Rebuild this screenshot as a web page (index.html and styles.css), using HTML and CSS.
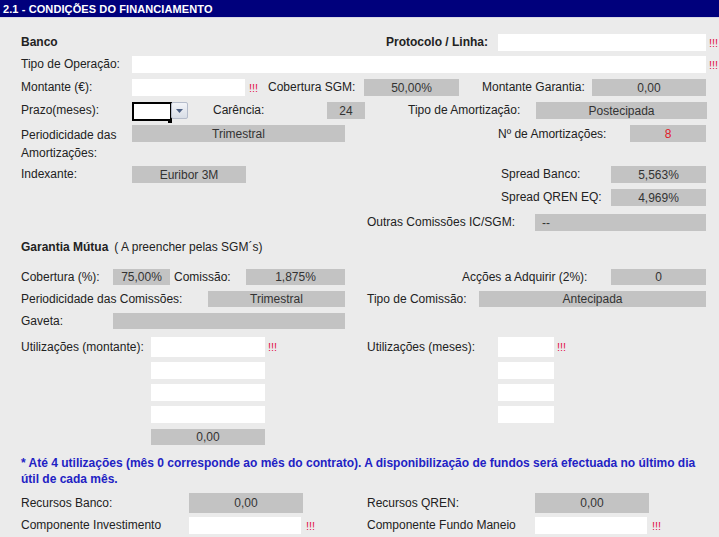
FILE: index.html
```html
<!DOCTYPE html>
<html lang="pt">
<head>
<meta charset="utf-8">
<title>2.1 - Condições do Financiamento</title>
<link rel="stylesheet" href="styles.css">
</head>
<body>
<div class="panel">
  <div class="hdr">2.1 - CONDIÇÕES DO FINANCIAMENTO</div>
  <div class="content">

    <div class="row r1">
      <span class="lbl b c-banco">Banco</span>
      <span class="lbl b c-proto">Protocolo / Linha:</span>
      <span class="fld white c-proto-f"></span>
      <span class="req">!!!</span>
    </div>

    <div class="row r2">
      <span class="lbl c-111">Tipo de Operação:</span>
      <span class="fld white c-tipo-f"></span>
      <span class="req">!!!</span>
    </div>

    <div class="row r3">
      <span class="lbl c-111">Montante (€):</span>
      <span class="fld white c-113"></span>
      <span class="req c-req-mont">!!!</span>
      <span class="lbl c-cob">Cobertura SGM:</span>
      <span class="fld grey c-95">50,00%</span>
      <span class="lbl c-mg">Montante Garantia:</span>
      <span class="fld grey c-114">0,00</span>
    </div>

    <div class="row r4">
      <span class="lbl c-111">Prazo(meses):</span>
      <span class="select">
        <span class="sel-box"></span>
        <span class="sel-btn"><svg width="7" height="4" viewBox="0 0 7 4"><path d="M0 0H7L3.5 4Z" fill="#4d6185"/></svg></span>
      </span>
      <span class="lbl c-car">Carência:</span>
      <span class="fld grey c-38">24</span>
      <span class="lbl c-tam">Tipo de Amortização:</span>
      <span class="fld grey c-171">Postecipada</span>
    </div>

    <div class="row r5">
      <span class="lbl two c-111">Periodicidade das Amortizações:</span>
      <span class="fld grey c-213">Trimestral</span>
      <span class="lbl c-nam">Nº de Amortizações:</span>
      <span class="fld grey red c-76">8</span>
    </div>

    <div class="row r6">
      <span class="lbl c-111">Indexante:</span>
      <span class="fld grey c-114">Euribor 3M</span>
      <span class="lbl c-spb">Spread Banco:</span>
      <span class="fld grey c-95">5,563%</span>
    </div>

    <div class="row r7">
      <span class="lbl c-spq">Spread QREN EQ:</span>
      <span class="fld grey c-95">4,969%</span>
    </div>

    <div class="row r8">
      <span class="lbl c-out">Outras Comissões IC/SGM:</span>
      <span class="fld grey left c-171">--</span>
    </div>

    <div class="row r9">
      <span class="lbl b">Garantia Mútua</span>
      <span class="lbl sub">( A preencher pelas SGM´s)</span>
    </div>

    <div class="row r10 short">
      <span class="lbl c-92">Cobertura (%):</span>
      <span class="fld grey c-57">75,00%</span>
      <span class="lbl c-com">Comissão:</span>
      <span class="fld grey c-99">1,875%</span>
      <span class="lbl c-acc">Acções a Adquirir (2%):</span>
      <span class="fld grey c-95">0</span>
    </div>

    <div class="row r11 short">
      <span class="lbl c-187">Periodicidade das Comissões:</span>
      <span class="fld grey c-137">Trimestral</span>
      <span class="lbl c-tcom">Tipo de Comissão:</span>
      <span class="fld grey c-227">Antecipada</span>
    </div>

    <div class="row r12 short">
      <span class="lbl c-92">Gaveta:</span>
      <span class="fld grey c-232"></span>
    </div>

    <div class="row r13 tall">
      <span class="lbl c-130">Utilizações (montante):</span>
      <span class="fld white c-114"></span>
      <span class="req c-req-ut">!!!</span>
      <span class="lbl c-131">Utilizações (meses):</span>
      <span class="fld white c-56"></span>
      <span class="req">!!!</span>
    </div>

    <div class="row r14">
      <span class="c-130"></span>
      <span class="fld white c-114"></span>
      <span class="c-gap233"></span>
      <span class="fld white c-56"></span>
    </div>
    <div class="row r15">
      <span class="c-130"></span>
      <span class="fld white c-114"></span>
      <span class="c-gap233"></span>
      <span class="fld white c-56"></span>
    </div>
    <div class="row r16">
      <span class="c-130"></span>
      <span class="fld white c-114"></span>
      <span class="c-gap233"></span>
      <span class="fld white c-56"></span>
    </div>

    <div class="row r17 short">
      <span class="c-130"></span>
      <span class="fld grey c-114">0,00</span>
    </div>

    <p class="note">* Até 4 utilizações (mês 0 corresponde ao mês do contrato). A disponibilização de fundos será efectuada no último dia útil de cada mês.</p>

    <div class="row r18 tall">
      <span class="lbl c-168">Recursos Banco:</span>
      <span class="fld grey c-114">0,00</span>
      <span class="c-64"></span>
      <span class="lbl c-168">Recursos QREN:</span>
      <span class="fld grey c-114">0,00</span>
    </div>

    <div class="row r19">
      <span class="lbl c-168">Componente Investimento</span>
      <span class="fld white c-112"></span>
      <span class="req c-req-comp">!!!</span>
      <span class="lbl c-168">Componente Fundo Maneio</span>
      <span class="fld white c-112"></span>
      <span class="req c-req-comp2">!!!</span>
    </div>

  </div>
</div>
</body>
</html>
```
FILE: styles.css
```css
* { box-sizing: border-box; }
html, body { margin: 0; padding: 0; }
body {
  background: #ebebeb;
  font-family: "Liberation Sans", Arial, sans-serif;
  font-size: 12px;
  color: #222;
  width: 719px;
  height: 537px;
  overflow: hidden;
}
.hdr {
  height: 18px;
  background: #00007c;
  color: #fff;
  font-weight: bold;
  font-size: 11px;
  letter-spacing: 0.1px;
  line-height: 18px;
  padding-left: 3px;
  border-bottom: 1px solid #d8d8e4;
}
.content { padding-left: 21px; }

.row {
  display: flex;
  align-items: center;
  height: 17px;
}
.row.short { height: 16px; }
.row.tall { height: 20px; }

.lbl { flex: none; white-space: nowrap; line-height: 17px; }
.b { font-weight: bold; }
.sub { margin-left: 6px; }
.lbl.two { white-space: normal; line-height: 18px; align-self: flex-start; padding-top: 1px; }

.fld {
  flex: none;
  height: 100%;
  display: flex;
  align-items: center;
  justify-content: center;
  line-height: 1;
  color: #333;
}
.white { background: #fff; }
.grey { background: #c3c3c3; }
.red { color: #e0202a; }
.left { justify-content: flex-start; padding-left: 7px; }

.req {
  flex: none;
  color: #e3124c;
  font-size: 11px;
  padding-left: 3px;
}

/* row tops */
.r1 { margin-top: 16px; }
.r2 { margin-top: 5px; }
.r3 { margin-top: 6px; }
.r4 { margin-top: 6px; }
.r5 { margin-top: 6px; height: 36px; align-items: flex-start; }
.r5 .fld { height: 17px; }
.r6 { margin-top: 5px; }
.r7 { margin-top: 6px; }
.r8 { margin-top: 8px; }
.r9 { margin-top: 8px; height: 17px; }
.r10 { margin-top: 13px; }
.r11 { margin-top: 6px; }
.r12 { margin-top: 6px; }
.r13 { margin-top: 8px; }
.r14 { margin-top: 5px; }
.r15 { margin-top: 5px; }
.r16 { margin-top: 5px; }
.r17 { margin-top: 6px; }
.r18 { margin-top: 6px; height: 21px; }
.r19 { margin-top: 4px; }

.note {
  margin: 10px 0 0 0;
  width: 690px;
  color: #2222c4;
  font-weight: bold;
  line-height: 16px;
}

/* widths */
.c-banco { width: 365px; }
.c-proto { width: 112px; }
.c-proto-f { width: 208px; }
.c-tipo-f { width: 574px; }
.c-111 { width: 111px; }
.c-113 { width: 113px; }
.c-req-mont { width: 23px; padding-left: 4px; }
.c-cob { width: 96px; }
.c-95 { width: 95px; }
.c-mg { width: 133px; padding-left: 23px; }
.c-114 { width: 114px; }
.c-car { width: 138px; padding-left: 24px; }
.c-38 { width: 38px; }
.c-tam { width: 171px; padding-left: 43px; }
.c-171 { width: 171px; }
.c-213 { width: 213px; }
.c-nam { width: 285px; padding-left: 153px; line-height: 18px; }
.c-76 { width: 76px; }
.c-spb { width: 365px; padding-left: 255px; }
.c-spq { width: 590px; padding-left: 480px; }
.c-out { width: 514px; padding-left: 346px; }
.c-92 { width: 92px; }
.c-57 { width: 57px; }
.c-com { width: 76px; padding-left: 4px; }
.c-99 { width: 99px; }
.c-acc { width: 266px; padding-left: 117px; }
.c-187 { width: 187px; }
.c-137 { width: 137px; }
.c-tcom { width: 134px; padding-left: 22px; }
.c-227 { width: 227px; }
.c-232 { width: 232px; }
.c-130 { width: 130px; flex: none; }
.c-req-ut { width: 102px; }
.c-131 { width: 131px; }
.c-56 { width: 56px; }
.c-gap233 { width: 233px; flex: none; }
.c-168 { width: 168px; }
.c-64 { width: 64px; flex: none; }
.c-112 { width: 112px; }
.c-req-comp { width: 66px; padding-left: 5px; }
.c-req-comp2 { padding-left: 5px; }

/* select */
.select {
  flex: none;
  display: flex;
  width: 57px;
  height: 17px;
  position: relative;
}
.sel-box {
  width: 40px;
  height: 19px;
  border: 2px solid #000;
  background: #fff;
}
.sel-box::after {
  content: "";
  position: absolute;
  left: 36px;
  top: 17px;
  width: 4px;
  height: 4px;
  background: #000;
}
.sel-btn {
  width: 17px;
  height: 17px;
  margin-left: -1px;
  background: linear-gradient(#f2f4f8, #d8dde6);
  border: 1px solid #b5bccb;
  border-radius: 2px;
  display: flex;
  align-items: center;
  justify-content: center;
}
```
